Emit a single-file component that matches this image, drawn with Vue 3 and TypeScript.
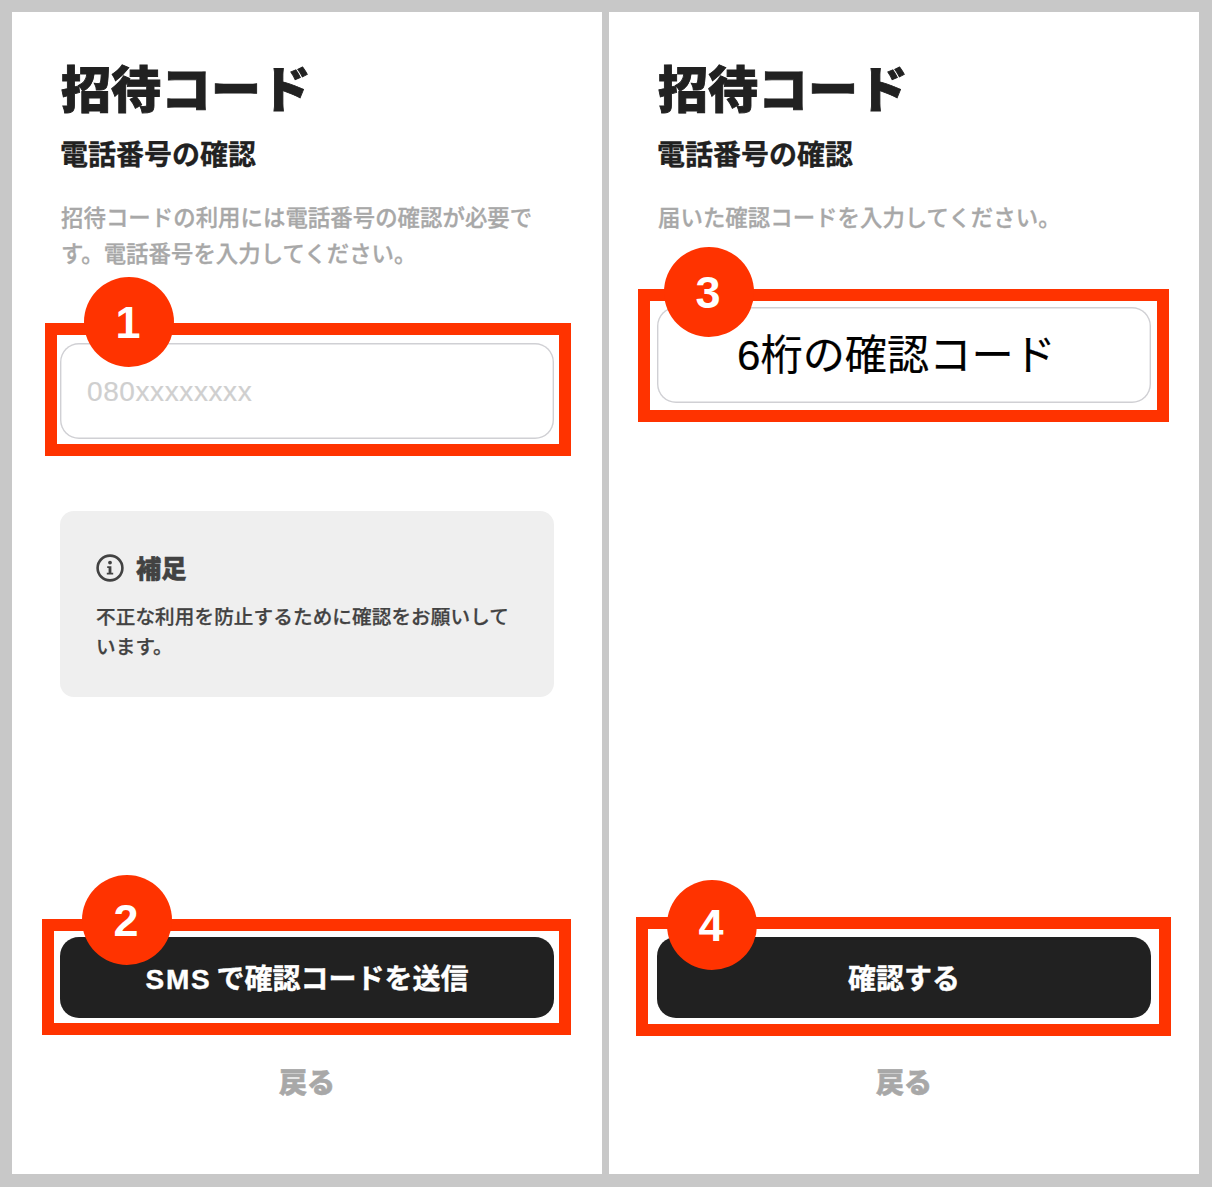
<script setup lang="ts">
interface Screen {
  desc: string
  fieldText: string
  fieldKind: 'placeholder' | 'code'
  fieldStep: number
  buttonPrefix: string
  button: string
  buttonStep: number
  hasNote: boolean
}

const screens: Screen[] = [
  {
    desc: '招待コードの利用には電話番号の確認が必要です。電話番号を入力してください。',
    fieldText: '080xxxxxxxx',
    fieldKind: 'placeholder',
    fieldStep: 1,
    buttonPrefix: 'SMS',
    button: 'で確認コードを送信',
    buttonStep: 2,
    hasNote: true,
  },
  {
    desc: '届いた確認コードを入力してください。',
    fieldText: '6桁の確認コード',
    fieldKind: 'code',
    fieldStep: 3,
    buttonPrefix: '',
    button: '確認する',
    buttonStep: 4,
    hasNote: false,
  },
]
</script>

<template>
  <div class="page">
    <section v-for="s in screens" :key="s.fieldStep" class="screen">
      <h1 class="title">招待コード</h1>
      <h2 class="subtitle">電話番号の確認</h2>
      <p class="desc">{{ s.desc }}</p>

      <div class="field" :class="s.fieldKind">
        <span class="field-text">{{ s.fieldText }}</span>
        <div class="highlight" :class="`hl-${s.fieldStep}`"></div>
        <div class="badge" :class="`badge-${s.fieldStep}`">{{ s.fieldStep }}</div>
      </div>

      <div v-if="s.hasNote" class="note">
        <div class="note-head">
          <svg class="note-icon" viewBox="0 0 28 28" aria-hidden="true">
            <circle cx="14" cy="14" r="12.4" fill="none" stroke="#424242" stroke-width="2.6" />
            <circle cx="14" cy="8.6" r="1.9" fill="#424242" />
            <path d="M11.2 12.2h4.2v6.6h1.8v1.8h-6.4v-1.8h1.8v-4.8h-1.4z" fill="#424242" />
          </svg>
          <span class="note-title">補足</span>
        </div>
        <p class="note-text">不正な利用を防止するために確認をお願いしています。</p>
      </div>

      <div class="footer">
        <button class="primary" type="button">
          <span class="button-label"><span v-if="s.buttonPrefix" class="latin">{{ s.buttonPrefix }}</span>{{ s.button }}</span>
          <span class="highlight" :class="`hl-${s.buttonStep}`"></span>
          <span class="badge" :class="`badge-${s.buttonStep}`">{{ s.buttonStep }}</span>
        </button>
        <div class="back">戻る</div>
      </div>
    </section>
  </div>
</template>

<style>
html,
body {
  margin: 0;
  background: #c8c8c8;
}
</style>

<style scoped>
.page {
  box-sizing: border-box;
  width: 1212px;
  height: 1187px;
  padding: 12px 13px 13px 12px;
  display: grid;
  grid-template-columns: 590px 590px;
  column-gap: 7px;
  background: #c8c8c8;
  font-family: "Liberation Sans", "Noto Sans CJK JP", sans-serif;
  text-spacing-trim: space-all;
  overflow: hidden;
}
.screen {
  box-sizing: border-box;
  background: #fff;
  padding: 43px 48px 70px;
  display: flex;
  flex-direction: column;
  min-height: 0;
}
.title {
  margin: 0;
  padding-left: 1px;
  font-size: 50px;
  line-height: 72px;
  font-weight: 900;
  color: #212121;
  -webkit-text-stroke: 0.9px #212121;
}
.subtitle {
  margin: 9px 0 0;
  font-size: 28px;
  line-height: 40px;
  font-weight: 700;
  color: #212121;
  -webkit-text-stroke: 0.3px #212121;
}
.desc {
  margin: 25px 0 0;
  padding-left: 1px;
  font-size: 22.4px;
  line-height: 36px;
  font-weight: 500;
  letter-spacing: 0.05px;
  color: #a8a8a8;
  -webkit-text-stroke: 0.3px #a8a8a8;
}
.field {
  position: relative;
  box-sizing: border-box;
  height: 96px;
  margin-top: 70px;
  display: flex;
  align-items: center;
  box-shadow: inset 0 0 0 1.4px #d0d0d4;
  border-radius: 19px;
  background: #fff;
}
.field.placeholder {
  padding: 2px 0 0 27px;
  font-size: 28px;
  color: #cfcfcf;
  letter-spacing: 0.6px;
  -webkit-text-stroke: 0.2px #cfcfcf;
}
.field.code {
  padding: 0 0 8px 80px;
  font-size: 42.2px;
  color: #000;
}
.field.code .field-text {
  -webkit-text-stroke: 0.2px #000;
}
.highlight {
  position: absolute;
  box-sizing: border-box;
  border: 12px solid #ff3300;
  pointer-events: none;
}
.hl-1 { top: -20px; bottom: -17px; left: -15px; right: -17px; }
.hl-2 { top: -18px; bottom: -17px; left: -18px; right: -17px; }
.hl-3 { top: -18px; bottom: -19px; left: -19px; right: -18px; }
.hl-4 { top: -20px; bottom: -18px; left: -21px; right: -20px; }
.badge {
  position: absolute;
  box-sizing: border-box;
  width: 90px;
  height: 90px;
  padding-right: 2px;
  border-radius: 50%;
  background: #ff3300;
  color: #fff;
  display: flex;
  align-items: center;
  justify-content: center;
  font-size: 45px;
  line-height: 1;
  font-weight: 700;
  letter-spacing: 0;
  -webkit-text-stroke: 0;
}
.badge-1 { left: 24px; top: -66px; }
.badge-2 { left: 22px; top: -62px; }
.badge-3 { left: 7px; top: -60px; }
.badge-4 { left: 10px; top: -57px; }
.note {
  box-sizing: border-box;
  height: 186px;
  margin-top: 72px;
  padding: 39px 36px 0;
  border-radius: 14px;
  background: #efefef;
  color: #424242;
}
.note-head {
  display: flex;
  align-items: center;
  gap: 12px;
  height: 36px;
}
.note-icon {
  width: 28px;
  height: 28px;
  flex: none;
}
.note-title {
  margin-top: -2px;
  font-size: 25.2px;
  font-weight: 900;
  -webkit-text-stroke: 0.5px #424242;
}
.note-text {
  margin: 16px 0 0;
  font-size: 19.6px;
  line-height: 30px;
  font-weight: 500;
  letter-spacing: 0.1px;
  -webkit-text-stroke: 0.25px #424242;
}
.footer {
  margin-top: auto;
  display: flex;
  flex-direction: column;
}
.primary {
  position: relative;
  height: 81px;
  padding: 0 0 2px;
  border: 0;
  border-radius: 19px;
  background: #212121;
  color: #fff;
  font-family: inherit;
  font-size: 28px;
  font-weight: 700;
}
.button-label {
  -webkit-text-stroke: 0.4px #fff;
}
.latin {
  letter-spacing: 1.7px;
  margin-right: 5px;
}
.back {
  margin-top: 46px;
  text-align: center;
  font-size: 28px;
  line-height: 40px;
  font-weight: 900;
  color: #a8a8a8;
  -webkit-text-stroke: 0.6px #a8a8a8;
}
</style>
